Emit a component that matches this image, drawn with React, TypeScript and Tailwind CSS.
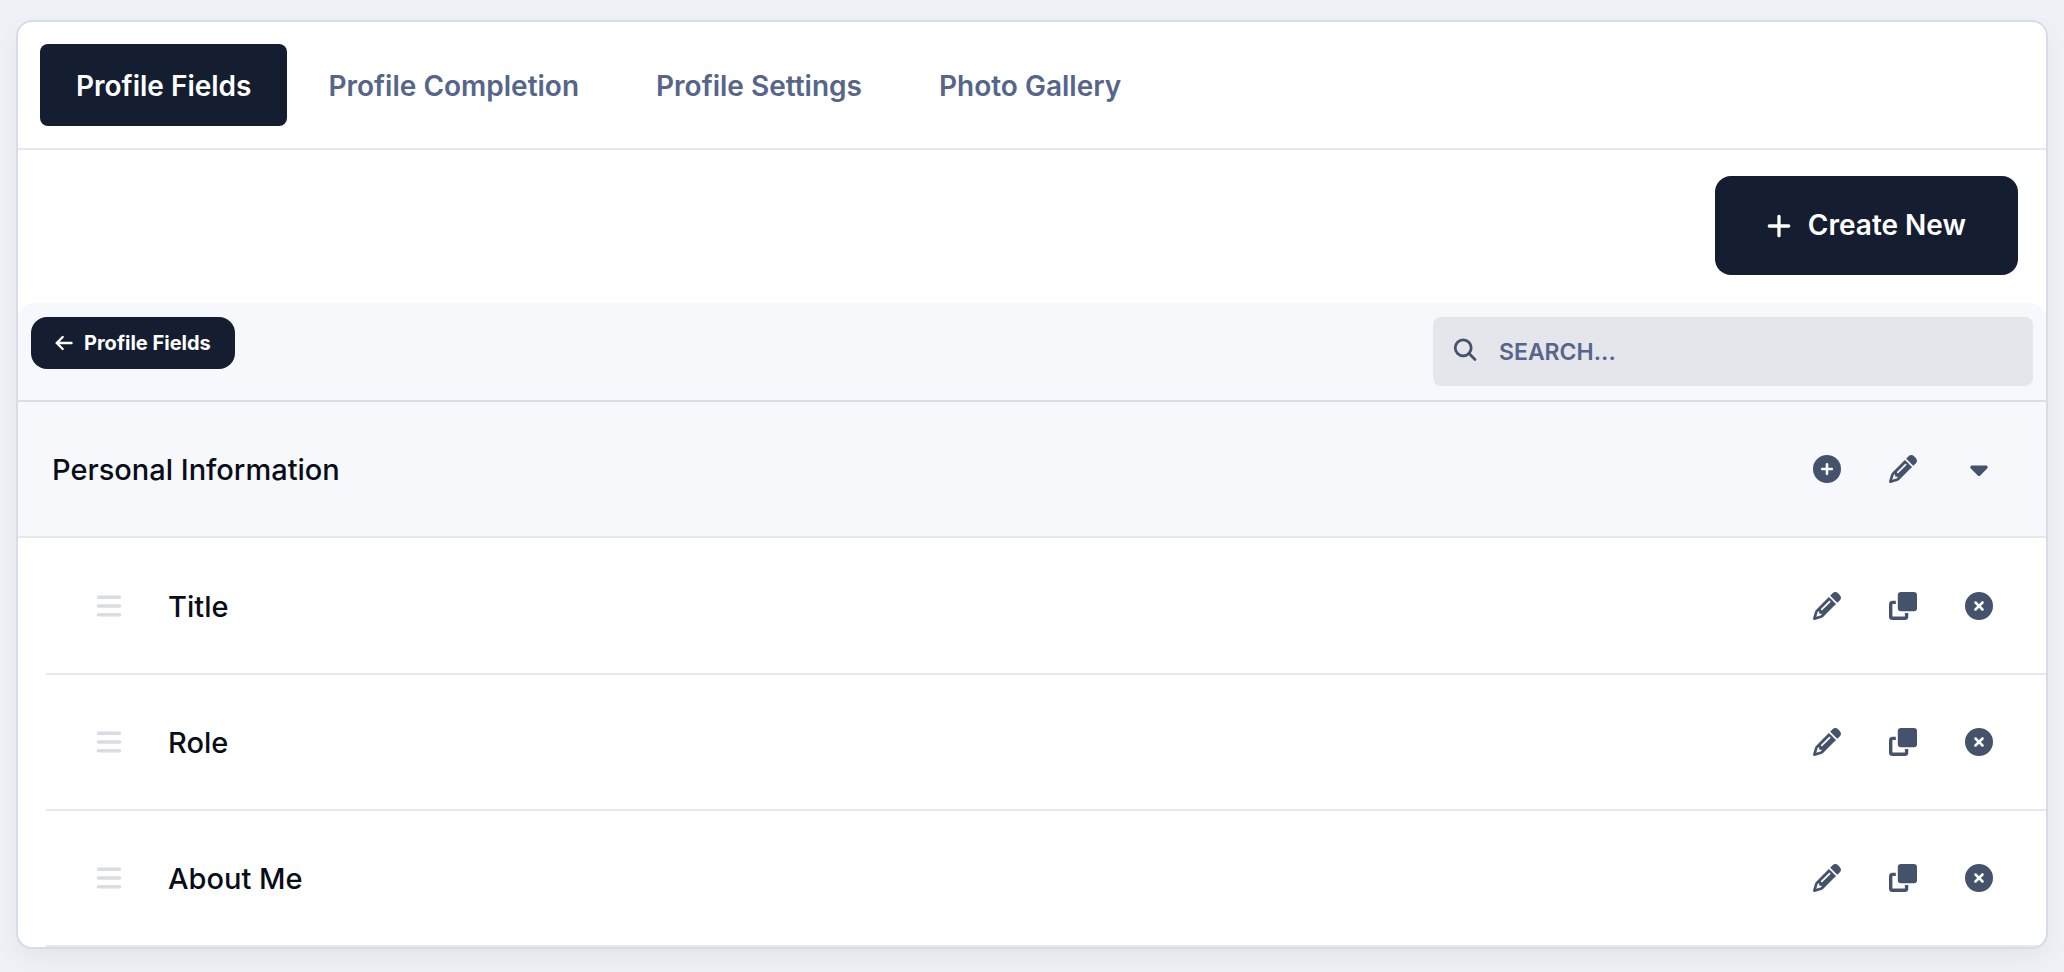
import React from "react";
import { FaBars, FaCaretDown, FaCirclePlus, FaCircleXmark, FaPencil } from "react-icons/fa6";

const tabs = ["Profile Fields", "Profile Completion", "Profile Settings", "Photo Gallery"];
const fields = ["Title", "Role", "About Me"];

function PlusIcon() {
  return (
    <svg viewBox="0 0 24 24" className="size-6" fill="none" stroke="currentColor" strokeWidth="3.3" strokeLinecap="round" aria-hidden="true">
      <path d="M12 2.3v19.4M2.3 12h19.4" />
    </svg>
  );
}

function ArrowLeftIcon() {
  return (
    <svg viewBox="0 0 18 18" className="size-[18px]" fill="none" stroke="currentColor" strokeWidth="2.4" strokeLinecap="round" strokeLinejoin="round" aria-hidden="true">
      <path d="M16.5 9H1.7M7.7 3L1.7 9L7.7 15" />
    </svg>
  );
}

function SearchIcon() {
  return (
    <svg viewBox="0 0 24 24" className="size-6" fill="none" stroke="currentColor" strokeWidth="2.8" strokeLinecap="round" aria-hidden="true">
      <circle cx="10.2" cy="9.8" r="8" />
      <path d="M16 15.6L22 21.6" />
    </svg>
  );
}

function CloneIcon() {
  return (
    <svg viewBox="0 0 28 28" className="size-7" fill="currentColor" aria-hidden="true">
      <rect x="8.8" y="0" width="19.2" height="19.2" rx="3.2" />
      <path d="M6.8 8.7H3.5A3.5 3.5 0 0 0 0 12.2v12.3A3.5 3.5 0 0 0 3.5 28h12.3a3.5 3.5 0 0 0 3.5-3.5v-3.4h-3.4v3.5H3.4V12.1h3.4z" />
    </svg>
  );
}

function IconButton({ label, children }: { label: string; children: React.ReactNode }) {
  return (
    <button type="button" aria-label={label} className="flex size-7 items-center justify-center">
      {children}
    </button>
  );
}

export default function App() {
  return (
    <div className="min-h-screen bg-[#eef2f7] px-4 pt-5 pb-[23px] font-['Inter',sans-serif] text-[#090d17]">
      <main className="overflow-hidden rounded-2xl border-2 border-[#d7dce8] bg-white shadow-[0_10px_26px_-2px_rgba(0,0,0,0.06)]">
        <nav className="flex gap-[5px] border-b-2 border-[#e4e8ee] p-[22px]">
          {tabs.map((tab, i) => (
            <a
              key={tab}
              href="#"
              aria-current={i === 0 ? "page" : undefined}
              className={
                i === 0
                  ? "rounded-lg bg-[#151d31] px-9 pt-[21px] pb-[19px] text-[28px] leading-[42px] font-semibold text-white"
                  : "rounded-lg px-9 pt-[21px] pb-[19px] text-[28px] leading-[42px] font-semibold text-[#56658a]"
              }
            >
              {tab}
            </a>
          ))}
        </nav>

        <div className="flex justify-end px-7 pt-[26px] pb-7">
          <button type="button" className="flex items-center gap-[17px] rounded-2xl bg-[#151d31] px-[52px] py-7 text-[28px] leading-[43px] font-semibold text-white">
            <PlusIcon />
            Create New
          </button>
        </div>

        <section>
          <div className="flex items-start justify-between rounded-t-2xl border-b-2 border-[#d7deea] bg-[#f6f8fc] px-[13px] py-[14px]">
            <button type="button" className="flex items-center gap-[11px] rounded-2xl bg-[#151d31] px-6 py-3 text-[20px] leading-7 font-bold text-white">
              <ArrowLeftIcon />
              Profile Fields
            </button>
            <label className="flex w-[600px] items-start gap-[22px] rounded-lg bg-[#e4e6eb] px-5 pt-[21px] pb-4 text-[#44526b]">
              <SearchIcon />
              <input
                type="search"
                aria-label="Search"
                placeholder="SEARCH..."
                className="h-8 min-w-0 flex-1 bg-transparent pb-1 text-[23px] leading-7 font-semibold outline-none placeholder:text-[#56658a]"
              />
            </label>
          </div>

          <div className="flex h-[136px] items-center justify-between border-b-2 border-[#e4e9f0] bg-[#f6f8fc] pr-[53px] pl-[34px]">
            <h2 className="pt-0.5 text-[29px] leading-9 font-medium">Personal Information</h2>
            <div className="flex gap-12 text-[28px] text-[#44526b]">
              <IconButton label="Add field"><FaCirclePlus /></IconButton>
              <IconButton label="Edit section"><FaPencil /></IconButton>
              <IconButton label="Collapse section"><FaCaretDown /></IconButton>
            </div>
          </div>

          <ul className="pt-px pl-7">
            {fields.map((field) => (
              <li key={field} className="flex h-[136px] items-center border-b-2 border-[#e4e9f0] pr-[53px] pl-[49px]">
                <FaBars className="size-7 text-[#d9dce2]" aria-hidden="true" />
                <span className="ml-[45px] flex-1 pt-0.5 text-[29px] leading-9 font-medium">{field}</span>
                <div className="flex gap-12 text-[28px] text-[#44526b]">
                  <IconButton label={`Edit ${field}`}><FaPencil /></IconButton>
                  <IconButton label={`Duplicate ${field}`}><CloneIcon /></IconButton>
                  <IconButton label={`Delete ${field}`}><FaCircleXmark /></IconButton>
                </div>
              </li>
            ))}
          </ul>
        </section>
      </main>
    </div>
  );
}
